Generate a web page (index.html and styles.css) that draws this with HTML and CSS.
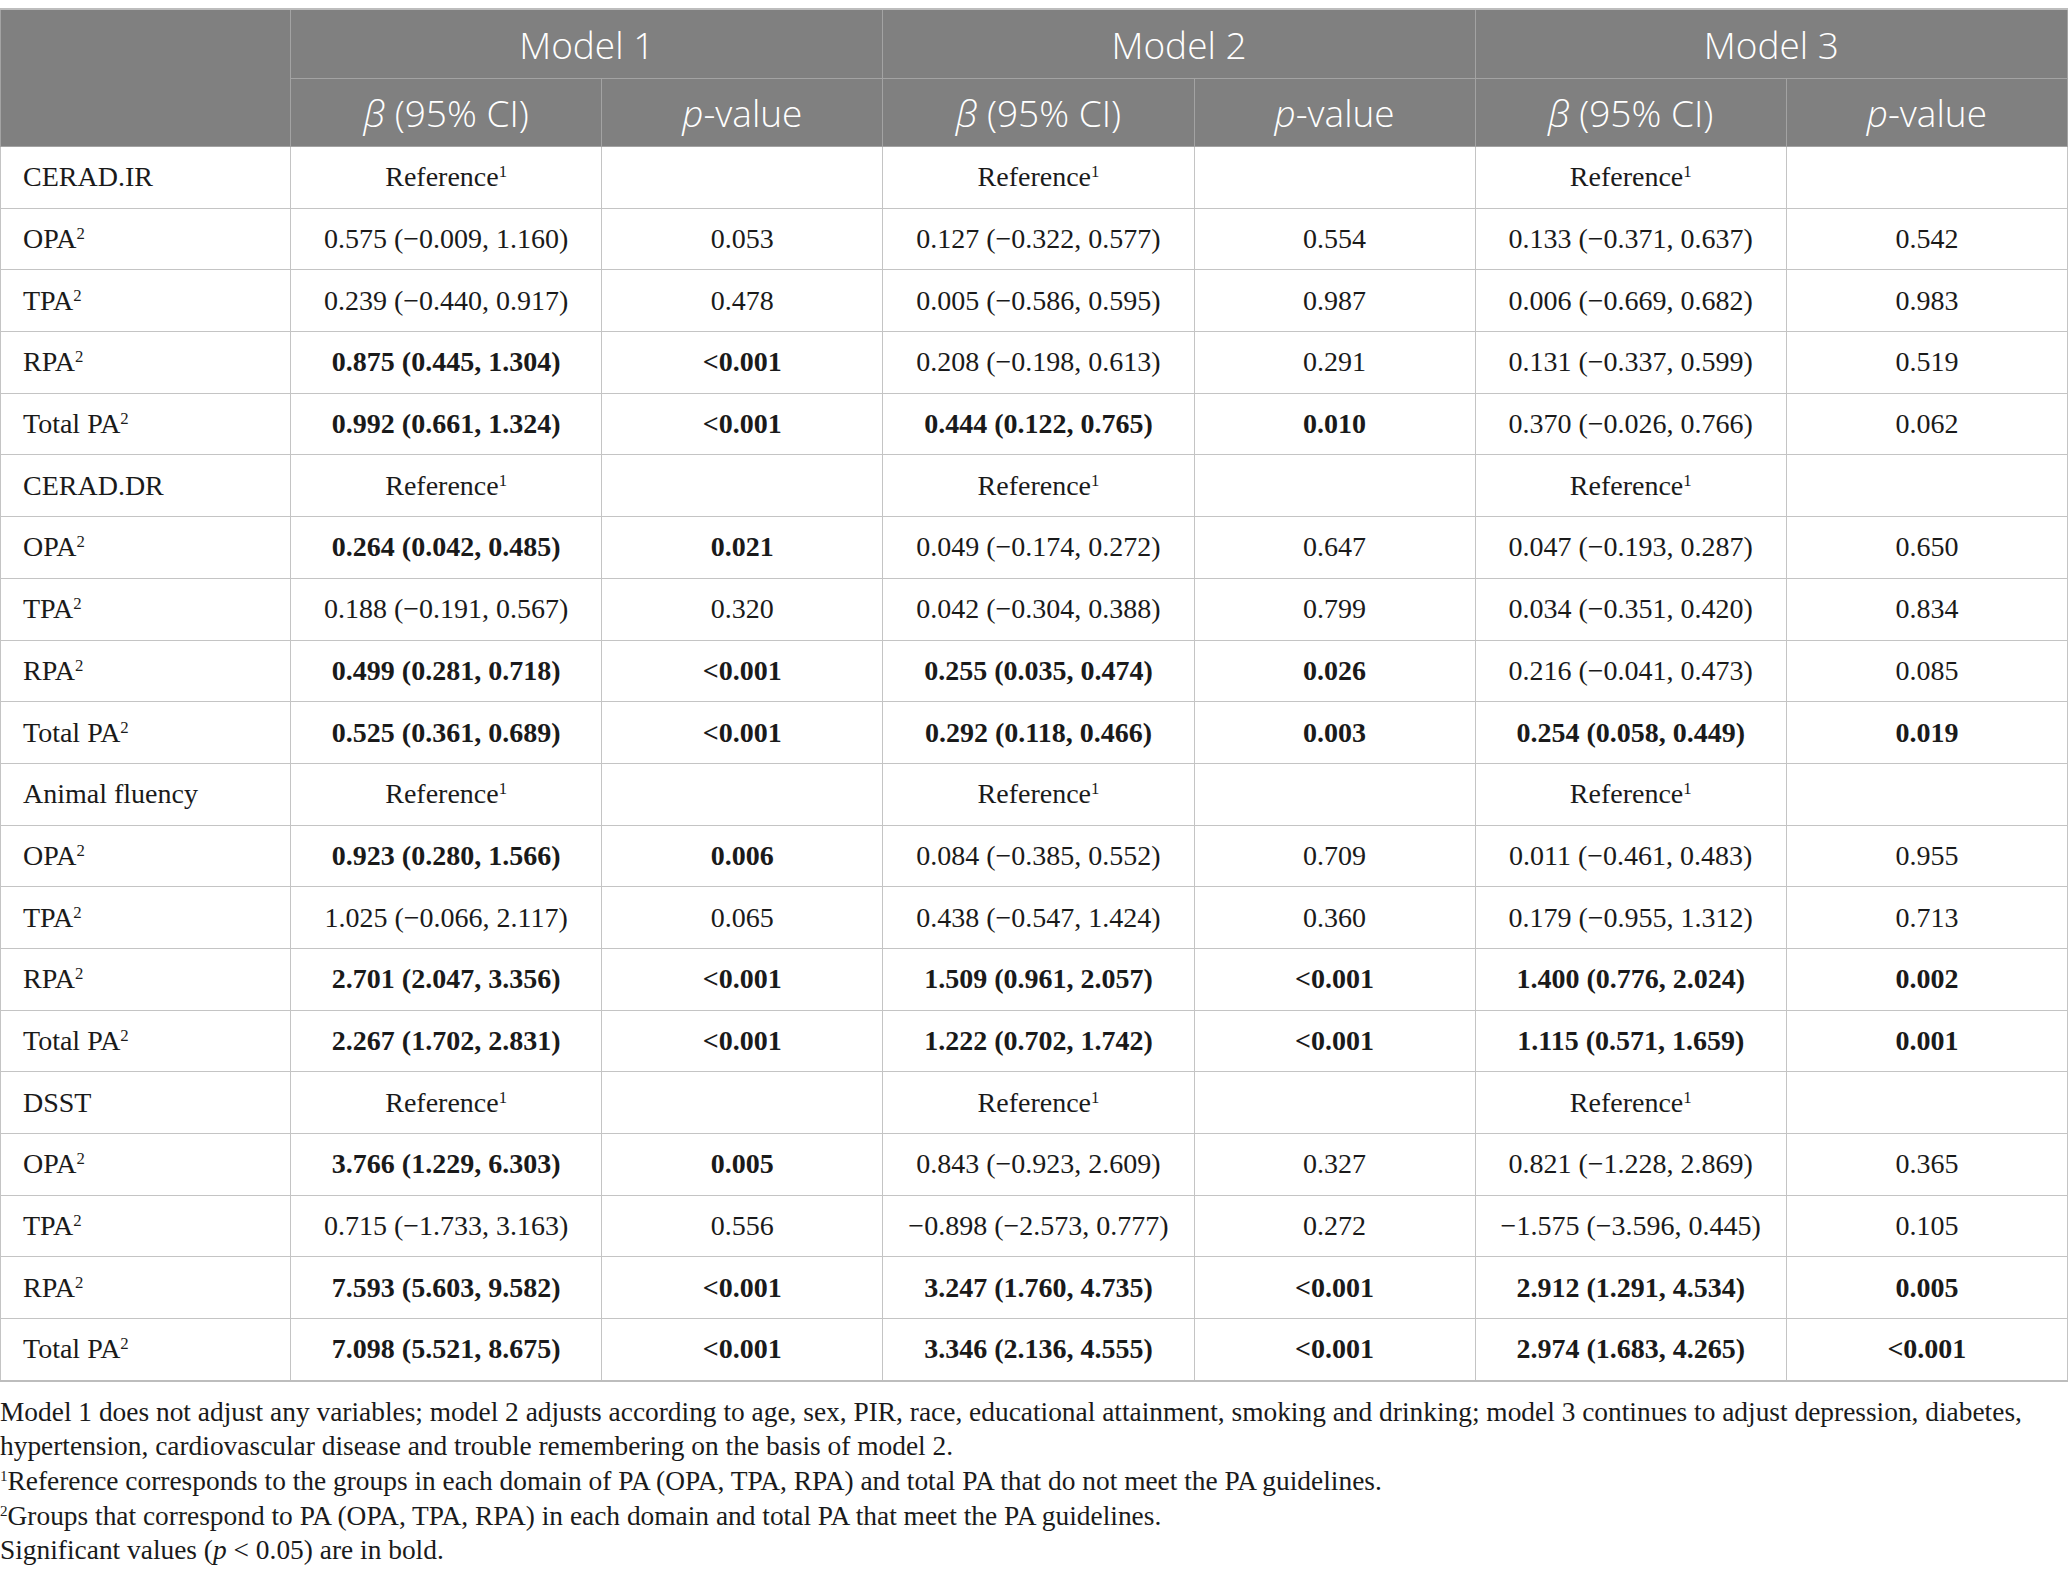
FILE: index.html
```html
<!DOCTYPE html>
<html lang="en">
<head>
	<meta charset="UTF-8">
	<meta name="viewport" content="width=device-width, initial-scale=1.0">
	<title>Table</title>
	<link rel="stylesheet" href="styles.css">
</head>
<body>
	<div class="wrap">
		<table class="tbl">
			<colgroup>
				<col class="c-name">
				<col class="c-beta"><col class="c-p">
				<col class="c-beta"><col class="c-p">
				<col class="c-beta"><col class="c-p">
			</colgroup>
			<thead>
				<tr class="head-top">
					<th rowspan="2"></th>
					<th colspan="2">Model 1</th>
					<th colspan="2">Model 2</th>
					<th colspan="2">Model 3</th>
				</tr>
				<tr class="head-sub">
					<th><i class="beta">β</i> (95% CI)</th><th><i>p</i>-value</th>
					<th><i class="beta">β</i> (95% CI)</th><th><i>p</i>-value</th>
					<th><i class="beta">β</i> (95% CI)</th><th><i>p</i>-value</th>
				</tr>
			</thead>
			<tbody>
				<tr><td>CERAD.IR</td><td>Reference<sup>1</sup></td><td></td><td>Reference<sup>1</sup></td><td></td><td>Reference<sup>1</sup></td><td></td></tr>
				<tr><td>OPA<sup>2</sup></td><td>0.575 (−0.009, 1.160)</td><td>0.053</td><td>0.127 (−0.322, 0.577)</td><td>0.554</td><td>0.133 (−0.371, 0.637)</td><td>0.542</td></tr>
				<tr><td>TPA<sup>2</sup></td><td>0.239 (−0.440, 0.917)</td><td>0.478</td><td>0.005 (−0.586, 0.595)</td><td>0.987</td><td>0.006 (−0.669, 0.682)</td><td>0.983</td></tr>
				<tr><td>RPA<sup>2</sup></td><td class="b">0.875 (0.445, 1.304)</td><td class="b">&lt;0.001</td><td>0.208 (−0.198, 0.613)</td><td>0.291</td><td>0.131 (−0.337, 0.599)</td><td>0.519</td></tr>
				<tr><td>Total PA<sup>2</sup></td><td class="b">0.992 (0.661, 1.324)</td><td class="b">&lt;0.001</td><td class="b">0.444 (0.122, 0.765)</td><td class="b">0.010</td><td>0.370 (−0.026, 0.766)</td><td>0.062</td></tr>

				<tr><td>CERAD.DR</td><td>Reference<sup>1</sup></td><td></td><td>Reference<sup>1</sup></td><td></td><td>Reference<sup>1</sup></td><td></td></tr>
				<tr><td>OPA<sup>2</sup></td><td class="b">0.264 (0.042, 0.485)</td><td class="b">0.021</td><td>0.049 (−0.174, 0.272)</td><td>0.647</td><td>0.047 (−0.193, 0.287)</td><td>0.650</td></tr>
				<tr><td>TPA<sup>2</sup></td><td>0.188 (−0.191, 0.567)</td><td>0.320</td><td>0.042 (−0.304, 0.388)</td><td>0.799</td><td>0.034 (−0.351, 0.420)</td><td>0.834</td></tr>
				<tr><td>RPA<sup>2</sup></td><td class="b">0.499 (0.281, 0.718)</td><td class="b">&lt;0.001</td><td class="b">0.255 (0.035, 0.474)</td><td class="b">0.026</td><td>0.216 (−0.041, 0.473)</td><td>0.085</td></tr>
				<tr><td>Total PA<sup>2</sup></td><td class="b">0.525 (0.361, 0.689)</td><td class="b">&lt;0.001</td><td class="b">0.292 (0.118, 0.466)</td><td class="b">0.003</td><td class="b">0.254 (0.058, 0.449)</td><td class="b">0.019</td></tr>

				<tr><td>Animal fluency</td><td>Reference<sup>1</sup></td><td></td><td>Reference<sup>1</sup></td><td></td><td>Reference<sup>1</sup></td><td></td></tr>
				<tr><td>OPA<sup>2</sup></td><td class="b">0.923 (0.280, 1.566)</td><td class="b">0.006</td><td>0.084 (−0.385, 0.552)</td><td>0.709</td><td>0.011 (−0.461, 0.483)</td><td>0.955</td></tr>
				<tr><td>TPA<sup>2</sup></td><td>1.025 (−0.066, 2.117)</td><td>0.065</td><td>0.438 (−0.547, 1.424)</td><td>0.360</td><td>0.179 (−0.955, 1.312)</td><td>0.713</td></tr>
				<tr><td>RPA<sup>2</sup></td><td class="b">2.701 (2.047, 3.356)</td><td class="b">&lt;0.001</td><td class="b">1.509 (0.961, 2.057)</td><td class="b">&lt;0.001</td><td class="b">1.400 (0.776, 2.024)</td><td class="b">0.002</td></tr>
				<tr><td>Total PA<sup>2</sup></td><td class="b">2.267 (1.702, 2.831)</td><td class="b">&lt;0.001</td><td class="b">1.222 (0.702, 1.742)</td><td class="b">&lt;0.001</td><td class="b">1.115 (0.571, 1.659)</td><td class="b">0.001</td></tr>

				<tr><td>DSST</td><td>Reference<sup>1</sup></td><td></td><td>Reference<sup>1</sup></td><td></td><td>Reference<sup>1</sup></td><td></td></tr>
				<tr><td>OPA<sup>2</sup></td><td class="b">3.766 (1.229, 6.303)</td><td class="b">0.005</td><td>0.843 (−0.923, 2.609)</td><td>0.327</td><td>0.821 (−1.228, 2.869)</td><td>0.365</td></tr>
				<tr><td>TPA<sup>2</sup></td><td>0.715 (−1.733, 3.163)</td><td>0.556</td><td>−0.898 (−2.573, 0.777)</td><td>0.272</td><td>−1.575 (−3.596, 0.445)</td><td>0.105</td></tr>
				<tr><td>RPA<sup>2</sup></td><td class="b">7.593 (5.603, 9.582)</td><td class="b">&lt;0.001</td><td class="b">3.247 (1.760, 4.735)</td><td class="b">&lt;0.001</td><td class="b">2.912 (1.291, 4.534)</td><td class="b">0.005</td></tr>
				<tr><td>Total PA<sup>2</sup></td><td class="b">7.098 (5.521, 8.675)</td><td class="b">&lt;0.001</td><td class="b">3.346 (2.136, 4.555)</td><td class="b">&lt;0.001</td><td class="b">2.974 (1.683, 4.265)</td><td class="b">&lt;0.001</td></tr>
			</tbody>
		</table>

		<div class="notes">
			<p>Model 1 does not adjust any variables; model 2 adjusts according to age, sex, PIR, race, educational attainment, smoking and drinking; model 3 continues to adjust depression, diabetes, hypertension, cardiovascular disease and trouble remembering on the basis of model 2.</p>
			<p><sup>1</sup>Reference corresponds to the groups in each domain of PA (OPA, TPA, RPA) and total PA that do not meet the PA guidelines.</p>
			<p><sup>2</sup>Groups that correspond to PA (OPA, TPA, RPA) in each domain and total PA that meet the PA guidelines.</p>
			<p>Significant values (<i>p</i> &lt; 0.05) are in bold.</p>
		</div>
	</div>
</body>
</html>
```

FILE: styles.css
```css
body{margin: 0; background: #fff; color: #1a1a1a;}
.wrap{padding-top: 8px; width: 2068px;}

.tbl{
	width: 2068px; border-collapse: collapse; table-layout: fixed;
	font-family: "Liberation Serif", "Times New Roman", serif; font-size: 28px;
	border-top: 2px solid #bdbdbd; border-bottom: 2px solid #bdbdbd;
}
.c-name{width: 290px;}
.c-beta{width: 311px;}
.c-p{width: 281px;}

.tbl th{
	background: #808080; color: #fff; font-weight: 300;
	font-family: "Open Sans", "Noto Sans", sans-serif; font-size: 37px;
	border: 1px solid #a3a3a3; text-align: center; padding: 0;
}
.head-top th{height: 68px;}
.head-sub th{height: 67px;}

.tbl td{
	border: 1px solid #c4c4c4; text-align: center; height: 60.7px; padding: 0;
	white-space: nowrap;
}
.tbl td:first-child{text-align: left; padding-left: 22px;}
.tbl td.b{font-weight: bold;}
.tbl sup{font-size: 0.6em; vertical-align: 0.55em; line-height: 0;}

.notes{
	font-family: "Liberation Serif", "Times New Roman", serif; font-size: 27.4px;
	line-height: 34.6px; margin-top: 13px;
}
.notes p{margin: 0;}
.notes sup{font-size: 0.55em; vertical-align: 0.6em; line-height: 0;}
```
